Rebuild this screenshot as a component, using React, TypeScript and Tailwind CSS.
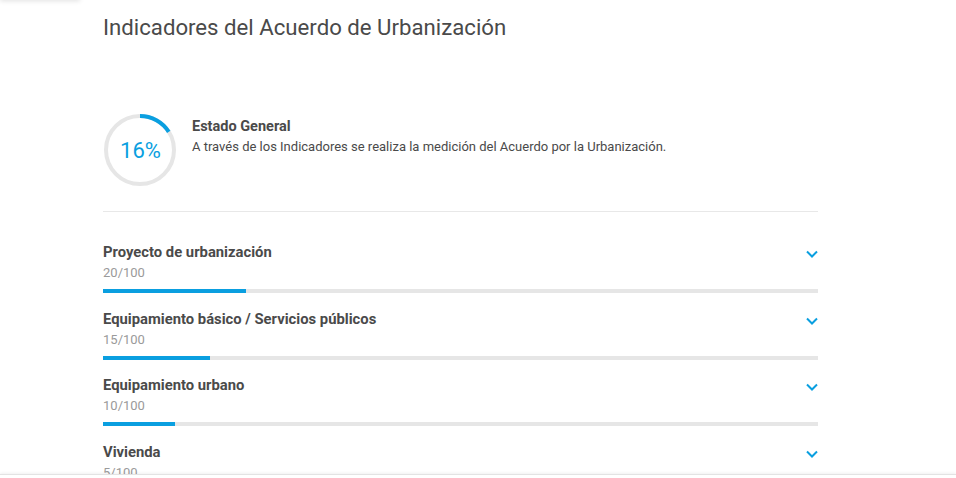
import React from "react";

const rows = [
  { title: "Proyecto de urbanización", value: 20 },
  { title: "Equipamiento básico / Servicios públicos", value: 15 },
  { title: "Equipamiento urbano", value: 10 },
  { title: "Vivienda", value: 5 },
];

function Chevron() {
  return (
    <svg width="14" height="10" viewBox="0 0 14 10" className="mt-[7px] mr-[-1px]">
      <path d="M2 2.5 L7 7.5 L12 2.5" fill="none" stroke="#0a9fe0" strokeWidth="2" />
    </svg>
  );
}

function Ring({ pct }: { pct: number }) {
  const r = 34;
  const c = 2 * Math.PI * r;
  return (
    <div className="relative w-[74px] h-[74px] shrink-0">
      <svg width="74" height="74" viewBox="0 0 74 74">
        <circle cx="37" cy="37" r={r} fill="none" stroke="#e6e6e6" strokeWidth="4" />
        <circle
          cx="37"
          cy="37"
          r={r}
          fill="none"
          stroke="#0a9fe0"
          strokeWidth="4"
          strokeDasharray={`${(c * pct) / 100} ${c}`}
          transform="rotate(-90 37 37)"
        />
      </svg>
      <div className="absolute inset-0 flex items-center justify-center text-[22px] text-[#0a9fe0] pl-[1px] pt-[1px]">
        {pct}%
      </div>
    </div>
  );
}

export default function App() {
  return (
    <div className="relative bg-white min-h-[478px] overflow-hidden" style={{ fontFamily: "Roboto, 'Noto Sans', sans-serif" }}>
      <div className="absolute left-0 top-[-6px] w-[80px] h-[6px] shadow-[0_1px_5px_rgba(0,0,0,0.12)]" />
      <div className="ml-[103px] w-[715px]">
        <h1 className="pt-[13px] text-[22.2px] leading-[28px] text-[#4a4a4a] font-normal">
          Indicadores del Acuerdo de Urbanización
        </h1>
        <div className="mt-[72px] flex items-start gap-[15px] pb-[24px] border-b border-[#e8e8e8]">
          <Ring pct={16} />
          <div className="pt-[4px]">
            <div className="text-[14.5px] leading-[20px] font-bold text-[#4a4a4a]">Estado General</div>
            <div className="mt-[1px] text-[13px] leading-[18px] text-[#4a4a4a]">
              A través de los Indicadores se realiza la medición del Acuerdo por la Urbanización.
            </div>
          </div>
        </div>
        <div className="pt-[30px]">
          {rows.map((r) => (
            <div key={r.title} className="mb-[15.5px]">
              <div className="flex justify-between items-start">
                <div className="text-[14.8px] leading-[20px] font-bold text-[#4a4a4a]">{r.title}</div>
                <Chevron />
              </div>
              <div className="mt-[1px] text-[13px] leading-[20px] text-[#9a9a9a]">{r.value}/100</div>
              <div className="mt-[6px] h-[4px] bg-[#e6e6e6]">
                <div className="h-full bg-[#0a9fe0]" style={{ width: `${r.value}%` }} />
              </div>
            </div>
          ))}
        </div>
      </div>
      <div className="fixed left-0 right-0 bottom-0 h-[4px] bg-white border-t border-[#e3e3e3] shadow-[0_-1px_3px_rgba(0,0,0,0.06)]" />
    </div>
  );
}
